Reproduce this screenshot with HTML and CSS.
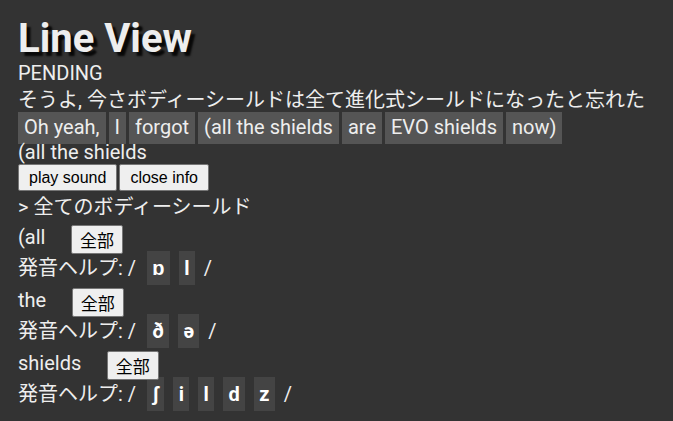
FILE: index.html
```html
<!DOCTYPE html>
<html lang="ja">
<head>
<meta charset="utf-8">
<title>Line View</title>
<link rel="stylesheet" href="styles.css">
</head>
<body>
<main class="page">
  <h1 class="title">Line View</h1>
  <div class="status">PENDING</div>
  <div class="sentence">そうよ, 今さボディーシールドは全て進化式シールドになったと忘れた</div>
  <div class="tokens">
    <span class="token">Oh yeah,</span>
    <span class="token">I</span>
    <span class="token">forgot</span>
    <span class="token">(all the shields</span>
    <span class="token">are</span>
    <span class="token">EVO shields</span>
    <span class="token">now)</span>
  </div>
  <div class="selected">(all the shields</div>
  <div class="actions">
    <button class="btn btn-action">play sound</button>
    <button class="btn btn-action">close info</button>
  </div>
  <div class="meaning">&gt; 全てのボディーシールド</div>

  <div class="word"><span class="word-text">(all</span><button class="btn btn-all">全部</button></div>
  <div class="pron">発音ヘルプ: /<span class="ph ph-first">ɒ</span><span class="ph">l</span><span class="slash">/</span></div>

  <div class="word"><span class="word-text">the</span><button class="btn btn-all">全部</button></div>
  <div class="pron">発音ヘルプ: /<span class="ph ph-first">ð</span><span class="ph">ə</span><span class="slash">/</span></div>

  <div class="word"><span class="word-text">shields</span><button class="btn btn-all">全部</button></div>
  <div class="pron">発音ヘルプ: /<span class="ph ph-first">ʃ</span><span class="ph">i</span><span class="ph">l</span><span class="ph">d</span><span class="ph">z</span><span class="slash">/</span></div>
</main>
</body>
</html>
```

FILE: styles.css
```css
html, body {
  margin: 0;
  padding: 0;
  background: #333333;
}

body {
  color: #eeeeee;
  font-family: Roboto, "Noto Sans CJK JP", sans-serif;
  font-size: 20px;
}

.page {
  padding: 15px 18px 0 18px;
}

.title {
  margin: 0;
  font-size: 40px;
  font-weight: 700;
  line-height: 47px;
  height: 47px;
  text-shadow: 4px 4px 2px rgba(0, 0, 0, 0.85);
}

.status {
  line-height: 23px;
  height: 23px;
}

.sentence {
  line-height: 31px;
  height: 31px;
  white-space: nowrap;
}

.tokens {
  display: flex;
  gap: 3px;
  height: 24px;
}

.token {
  background: #555555;
  padding: 4px 6px;
  line-height: 23.5px;
  height: 23.5px;
  margin-top: -4px;
}

.selected {
  line-height: 24px;
  height: 24px;
}

.actions {
  display: flex;
  gap: 2px;
  height: 28px;
}

.btn {
  font-family: "Liberation Sans", "Noto Sans CJK JP", sans-serif;
  font-size: 16px;
  color: #000000;
  background: #efefef;
  border: 1px solid #767676;
  border-radius: 2px;
  margin: 0;
}

.btn-action {
  line-height: 25px;
  height: 27px;
  padding: 0 10px;
}

.meaning {
  line-height: 30px;
  height: 30px;
}

.word {
  display: flex;
  align-items: flex-start;
  height: 27px;
  line-height: 27px;
  padding-top: 2px;
}

.btn-all {
  font-family: "Noto Sans CJK JP", sans-serif;
  font-size: 17px;
  height: 29px;
  line-height: 27px;
  padding: 0 8px;
  margin-left: 25.5px;
  margin-top: 1px;
  position: relative;
}

.pron {
  display: flex;
  align-items: flex-start;
  height: 34px;
  line-height: 34px;
  white-space: nowrap;
}

.ph {
  background: #444444;
  color: #ffffff;
  font-weight: 700;
  padding: 0 5.3px;
  margin-left: 9px;
  line-height: 34px;
  height: 34px;
}

.ph-first {
  margin-left: 11px;
}

.slash {
  margin-left: 9px;
}
```
